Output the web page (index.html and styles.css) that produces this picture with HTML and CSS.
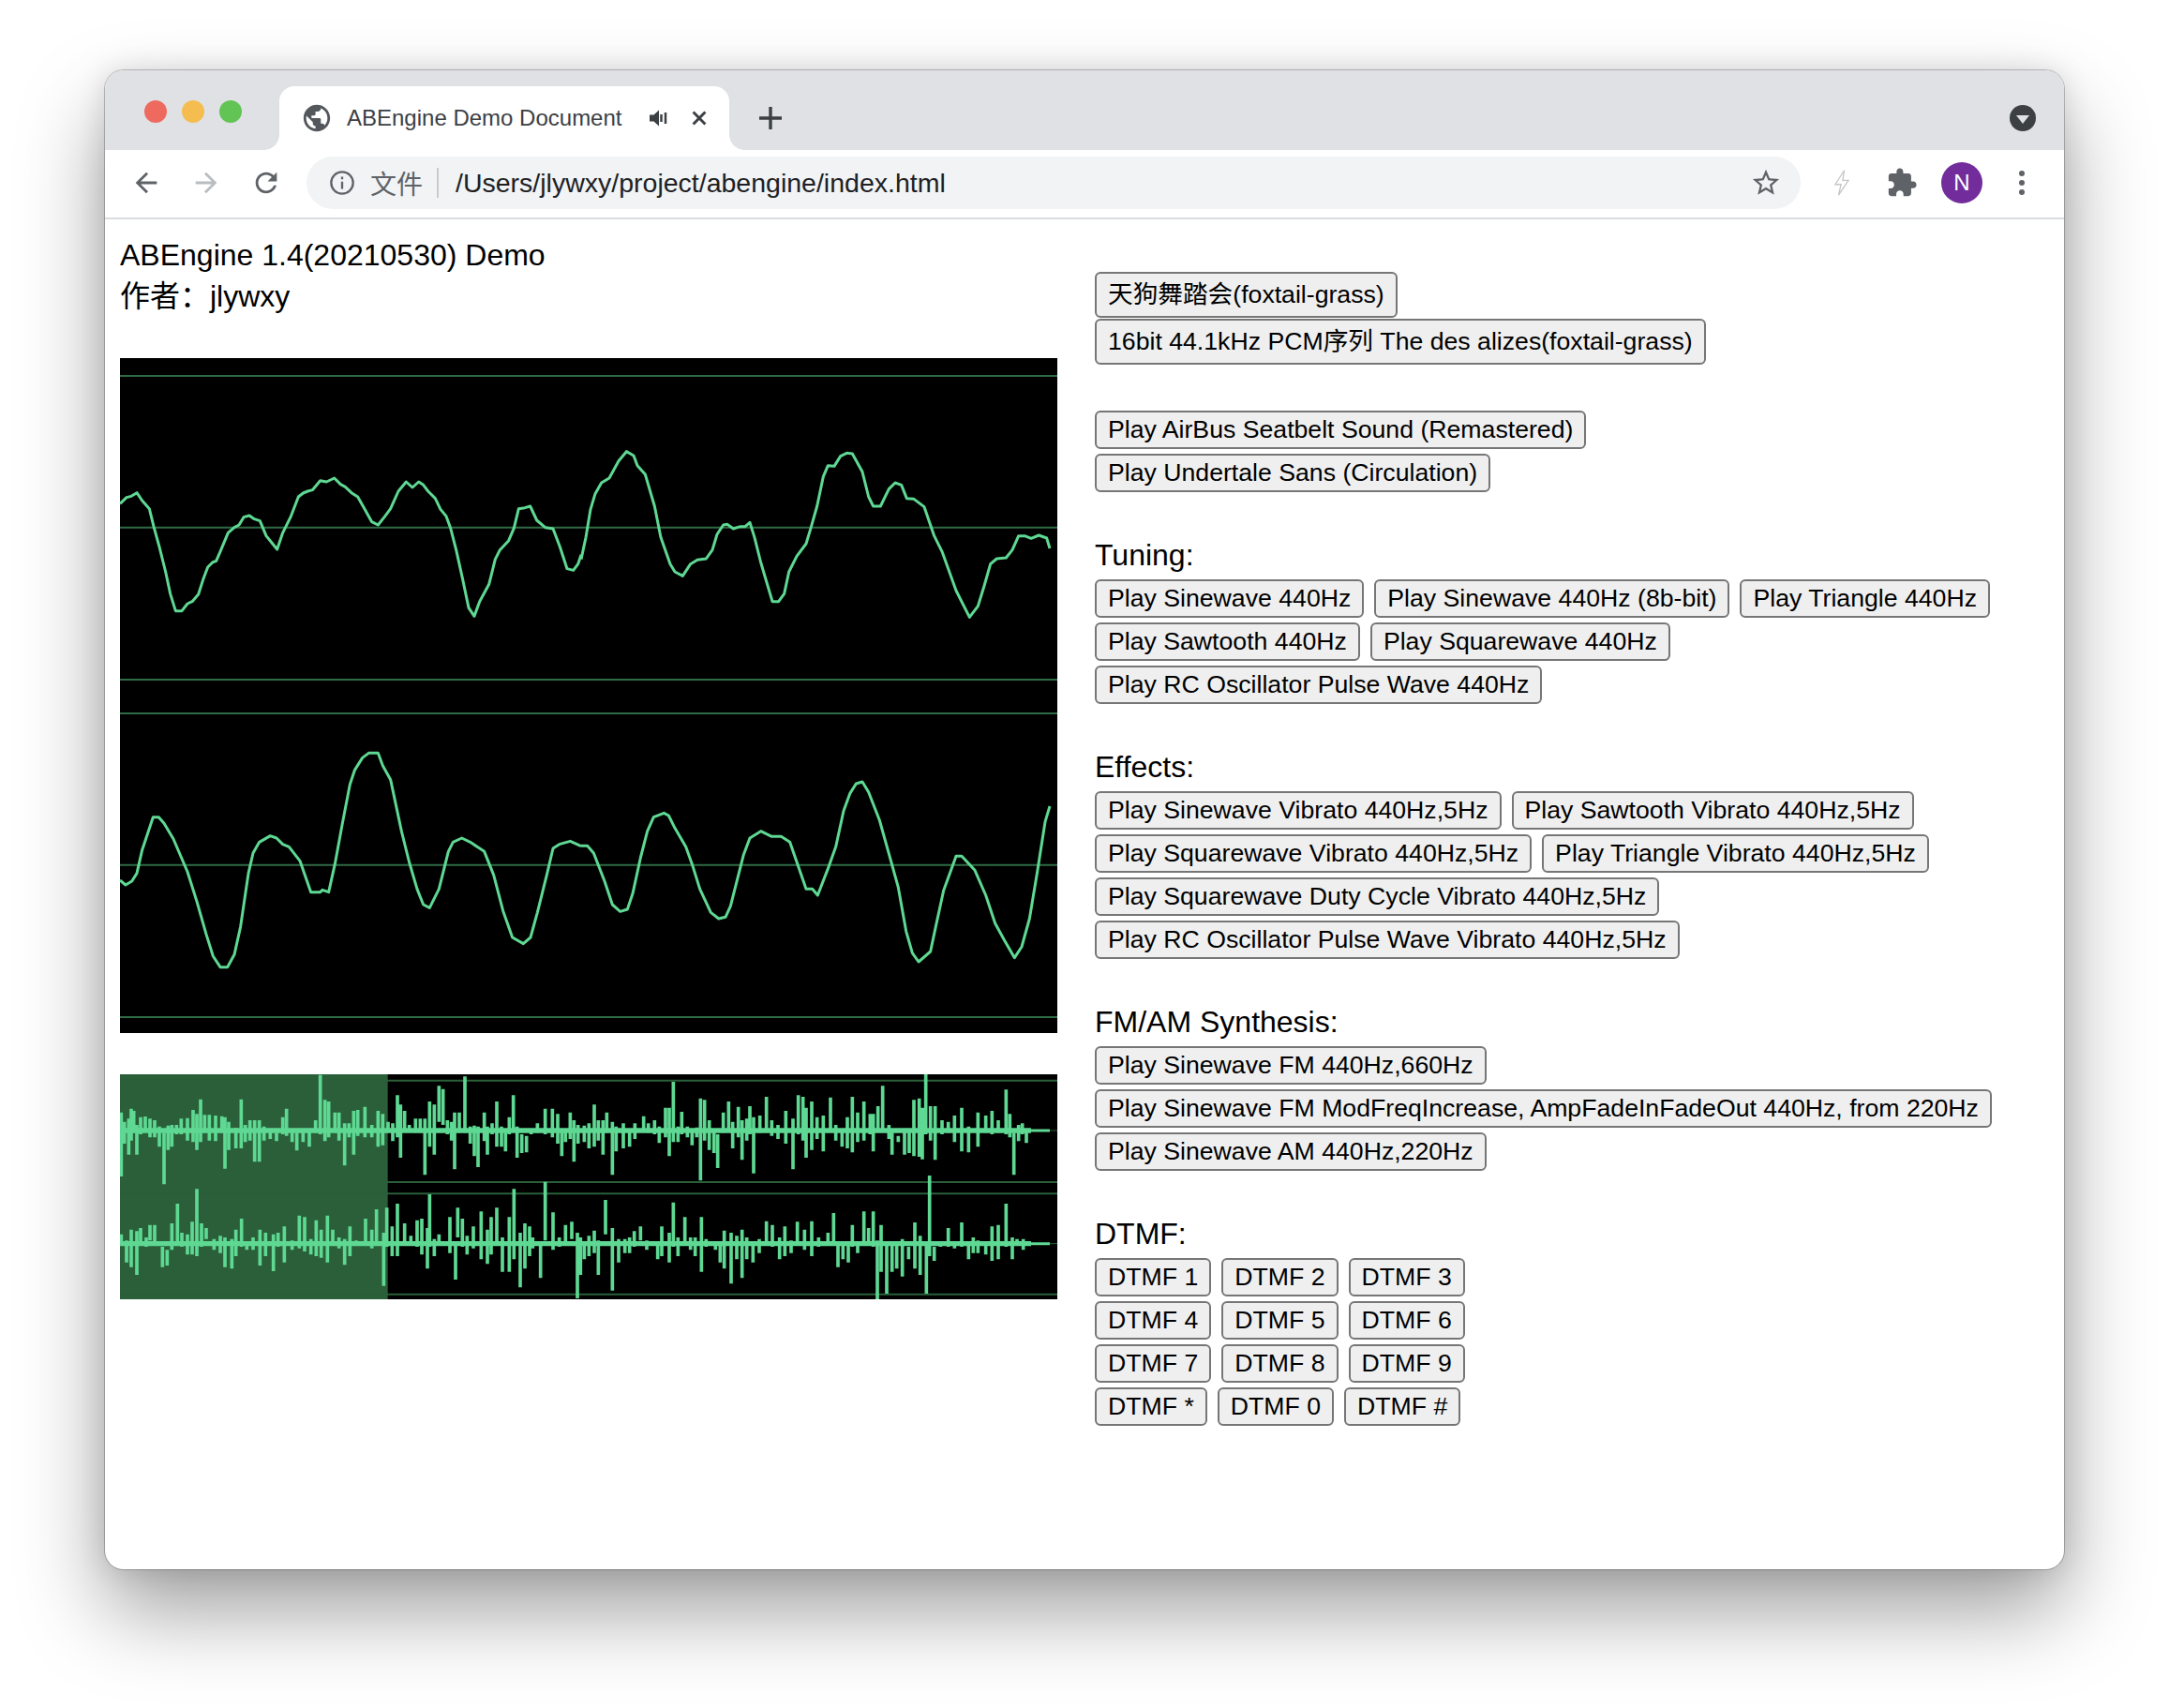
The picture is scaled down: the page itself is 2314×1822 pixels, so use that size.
FILE: index.html
```html
<!DOCTYPE html>
<html lang="en">
<head>
    <meta charset="UTF-8">
    <meta name="viewport" content="width=device-width, initial-scale=1.0">
    <title>ABEngine Demo Document</title>
    <link rel="stylesheet" href="styles.css">
</head>
<body>
    <div class="window">
        <div class="tabstrip">
            <div class="lights">
                <span class="light red"></span>
                <span class="light yellow"></span>
                <span class="light green"></span>
            </div>
            <div class="tab">
                <svg class="tab-globe" viewBox="0 0 24 24"><path d="M12 2C6.48 2 2 6.48 2 12s4.48 10 10 10 10-4.48 10-10S17.52 2 12 2zm-1 17.93c-3.95-.49-7-3.85-7-7.93 0-.62.08-1.21.21-1.79L9 15v1c0 1.1.9 2 2 2v1.93zm6.9-2.54c-.26-.81-1-1.39-1.9-1.39h-1v-3c0-.55-.45-1-1-1H8v-2h2c.55 0 1-.45 1-1V7h2c1.1 0 2-.9 2-2v-.41c2.93 1.19 5 4.06 5 7.41 0 2.08-.8 3.97-2.1 5.39z"/></svg>
                <span class="tab-title">ABEngine Demo Document</span>
                <svg class="tab-speaker" viewBox="0 0 24 24"><path d="M2 8.5h4.5L12 3.5v17l-5.500-5H2z"/><path d="M14.500 8v8M19 6v12" class="speaker-bars"/></svg>
                <svg class="tab-close" viewBox="0 0 24 24"><path d="M5 5l14 14M19 5L5 19"/></svg>
            </div>
            <svg class="new-tab" viewBox="0 0 30 30"><path d="M15 3v24M3 15h24"/></svg>
            <div class="tab-search"><span class="tab-search-arrow"></span></div>
        </div>

        <div class="toolbar">
            <div class="tool-btn"><svg class="icon" viewBox="0 0 24 24"><path d="M20 11H7.830l5.590-5.590L12 4l-8 8 8 8 1.410-1.410L7.830 13H20v-2z"/></svg></div>
            <div class="tool-btn"><svg class="icon faded" viewBox="0 0 24 24"><path d="M4 11h12.170l-5.590-5.590L12 4l8 8-8 8-1.410-1.410L16.170 13H4v-2z"/></svg></div>
            <div class="tool-btn"><svg class="icon" viewBox="0 0 24 24"><path d="M17.650 6.350C16.200 4.900 14.210 4 12 4c-4.420 0-7.990 3.580-7.990 8s3.570 8 7.990 8c3.730 0 6.840-2.550 7.730-6h-2.080c-.82 2.330-3.040 4-5.650 4-3.310 0-6-2.690-6-6s2.690-6 6-6c1.660 0 3.140.69 4.220 1.780L13 11h7V4l-2.350 2.350z"/></svg></div>
            <div class="omnibox">
                <svg class="omni-info" viewBox="0 0 24 24"><circle cx="12" cy="12" r="10"/><path d="M12 11v6.500M12 6.500v2.200"/></svg>
                <span class="omni-scheme">文件</span>
                <span class="omni-sep"></span>
                <span class="omni-url">/Users/jlywxy/project/abengine/index.html</span>
                <svg class="omni-star" viewBox="0 0 24 24"><path d="M22 9.240l-7.190-.62L12 2 9.190 8.630 2 9.240l5.460 4.730L5.820 21 12 17.270 18.180 21l-1.630-7.030L22 9.240zM12 15.400l-3.760 2.270 1-4.280-3.320-2.880 4.380-.38L12 6.100l1.710 4.040 4.380.38-3.320 2.880 1 4.280L12 15.400z"/></svg>
            </div>
            <div class="tool-btn first-ext"><svg class="bolt" viewBox="0 0 24 34"><path d="M15 2L4 19h7l-3 13 12-18h-7z"/></svg></div>
            <div class="tool-btn"><svg class="icon" viewBox="0 0 24 24"><path d="M20.500 11H19V7c0-1.100-.9-2-2-2h-4V3.500C13 2.120 11.880 1 10.500 1S8 2.120 8 3.500V5H4c-1.100 0-1.990.9-1.990 2v3.800H3.500c1.490 0 2.700 1.210 2.700 2.700s-1.210 2.700-2.700 2.700H2V20c0 1.100.9 2 2 2h3.800v-1.500c0-1.490 1.210-2.700 2.700-2.700 1.490 0 2.700 1.210 2.700 2.700V22H17c1.100 0 2-.9 2-2v-4h1.500c1.380 0 2.500-1.120 2.500-2.500S21.880 11 20.500 11z"/></svg></div>
            <div class="tool-btn"><span class="avatar">N</span></div>
            <div class="tool-btn"><span class="kebab"><i></i><i></i><i></i></span></div>
        </div>

        <div class="page">
            <div class="left-col">
                <div class="intro">ABEngine 1.4(20210530) Demo<br>作者：jlywxy</div>

                <svg class="scope" viewBox="0 0 3000 2160">
                    <g class="grid">
                        <path d="M0 57H3000M0 542H3000M0 1029H3000M0 1137H3000M0 1622H3000M0 2109H3000"/>
                    </g>
                    <g class="trace" transform="translate(-24,-6)">
                        <polyline points="24,472 45,452 60,448 78,437 95,462 118,488 132,545 150,610 170,690 185,760 202,815 222,815 240,792 255,785 275,762 290,715 305,675 320,660 332,655 345,625 370,565 390,548 405,540 420,515 438,510 452,520 472,527 492,575 510,597 527,618 545,565 570,515 595,450 610,438 625,432 640,428 665,398 685,402 710,390 730,410 745,418 765,437 785,450 805,485 830,530 850,540 870,515 890,488 915,432 940,402 960,420 980,402 995,412 1010,432 1033,455 1050,490 1068,512 1082,550 1100,620 1120,710 1140,805 1158,832 1175,785 1205,730 1225,650 1240,620 1268,590 1285,550 1300,488 1320,485 1337,480 1358,525 1385,548 1410,552 1432,610 1455,680 1475,685 1490,665 1500,635"/>
                    </g>
                    <g class="trace" transform="translate(1476,-6)">
                        <polyline points="0,650 15,580 30,490 45,440 65,405 90,390 120,335 145,305 168,318 180,350 205,378 235,480 255,580 285,665 300,690 325,703 350,665 372,652 400,648 420,620 435,570 455,540 468,538 487,552 510,545 525,545 540,532 555,580 575,660 612,785 632,785 650,760 665,690 690,640 720,600 735,550 755,480 775,385 790,350 810,352 830,320 850,310 868,312 900,370 920,450 935,480 958,480 985,425 1005,405 1025,412 1042,455 1065,457 1098,482 1130,575 1155,625 1200,750 1243,835 1270,800 1290,735 1310,665 1330,648 1360,645 1380,620 1400,575 1420,575 1440,583 1465,573 1490,582 1500,615"/>
                    </g>
                    <g class="trace" transform="translate(-24,1074)">
                        <polyline points="24,597 42,612 62,600 78,575 95,500 130,395 148,395 165,415 195,465 240,570 270,665 300,770 322,840 345,875 368,875 390,835 410,745 435,575 450,510 470,475 505,455 525,462 545,482 565,490 600,535 635,635 665,635 672,628 692,635 712,545 735,420 760,290 775,245 800,205 820,190 850,190 865,230 890,275 925,440 950,540 975,625 995,675 1015,685 1045,625 1075,505 1090,475 1118,462 1145,475 1190,505 1220,580 1250,695 1280,780 1315,800 1338,780 1360,700 1390,580 1410,495 1430,482 1465,472 1500,488"/>
                    </g>
                    <g class="trace" transform="translate(1476,1074)">
                        <polyline points="0,487 20,487 40,510 75,600 100,675 125,697 148,690 165,640 190,525 212,440 232,395 265,382 280,390 300,430 335,490 355,545 380,625 415,700 440,720 462,715 478,680 520,515 540,462 575,440 610,457 640,457 668,475 720,625 740,625 757,645 790,560 815,490 840,375 860,320 880,288 900,282 920,315 955,405 990,530 1015,620 1040,760 1060,830 1080,858 1118,825 1135,745 1160,630 1200,520 1218,520 1260,565 1295,645 1325,735 1355,790 1387,845 1410,810 1435,720 1460,570 1485,410 1500,360"/>
                    </g>
                </svg>

                <svg class="overview" viewBox="0 0 3000 720">
                    <rect class="played" x="0" y="0" width="857" height="720"/>
                    <g class="overview-grid">
                        <path d="M0 20H3000M0 345H3000M0 382H3000M0 704H3000"/>
                        <path class="mid" d="M0 180H3000M0 542H3000"/>
                    </g>
                    <g class="bars" transform="translate(-24,-48)">
                        <path d="M24 228H1500M24 590H1500" class="bars-core"/>
                        <path d="M28 170V375M38 200V270M52 190V305M60 158V260M68 165V235M78 210V305M90 185V240M105 183V225M120 190V250M135 195V250M150 215V280M165 235V400M178 212V290M190 210V280M205 210V240M220 190V240M240 188V260M258 162V265M270 175V290M282 128V265M295 178V235M310 178V260M330 180V262M350 182V235M360 185V350M372 200V290M395 220V285M412 128V285M425 210V265M440 195V260M455 195V328M470 195V328M485 215V260M505 230V255M525 235V262M545 185V240M557 158V245M575 230V265M590 235V292M610 228V265M630 225V280M650 195V235M665 50V240M680 130V262M692 135V250M712 170V230M725 170V260M743 205V340M757 205V250M772 165V305M785 162V245M808 152V250M830 210V250M850 165V280M865 175V275M882 200V235M897 205V262M912 115V250M922 145V315M935 165V225M950 210V230M970 190V235M985 190V235M1000 190V370M1015 135V280M1030 145V305M1045 85V200M1058 95V210M1072 195V240M1085 200V260M1095 170V352M1110 170V235M1128 55V235M1145 215V270M1158 212V310M1170 215V345M1190 170V262M1200 215V305M1215 205V240M1230 135V280M1245 215V280M1258 225V295M1270 185V240M1283 115V230M1295 215V315M1310 240V300M1325 245V298M1340 225V240M1360 205V235M1385 158V240M1408 158V250M1425 175V270M1438 225V310M1450 230V265M1465 170V255M1477 195V328M1490 210V270"/>
                        <path d="M28 560V595M45 580V650M60 545V665M78 550V690M90 540V590M108 570V600M120 530V580M135 530V590M160 600V665M175 610V660M190 525V610M208 462V595M222 555V600M240 560V625M255 520V625M270 415V630M285 525V600M300 540V575M325 575V610M345 565V620M360 570V665M382 575V670M395 545V630M413 510V600M430 590V610M450 570V610M472 545V660M490 555V630M515 560V678M530 555V600M550 535V650M575 580V610M598 500V605M615 505V615M635 575V625M652 515V630M668 545V635M688 500V650M705 545V590M725 570V605M743 575V658M760 535V630M780 580V595M810 510V590M830 545V605M845 480V590M868 555V725M878 475V600M895 535V630M912 462V630M935 525V595M955 565V590M975 515V600M990 510V625M1008 540V670M1015 432V600M1030 575V630M1045 560V590M1080 505V620M1098 590V705M1105 475V570M1120 510V600M1135 565V625M1155 535V605M1180 487V640M1200 545V655M1212 505V625M1230 475V595M1248 570V680M1270 505V680M1285 415V640M1305 555V730M1320 525V670M1335 535V630M1345 570V605M1370 590V700M1385 392V580M1410 490V610M1430 570V600M1450 530V590M1470 520V575M1488 555V765M1498 570V690"/>
                    </g>
                    <g class="bars" transform="translate(1476,-48)">
                        <path d="M0 228H1440M0 590H1440" class="bars-core"/>
                        <path class="bars-tail" d="M1440 228H1500M1440 590H1500"/>
                        <path d="M10 212V265M25 205V285M42 145V280M55 195V260M70 195V305M82 170V235M100 200V370M112 215V295M135 205V285M155 225V280M172 205V255M200 182V230M215 205V235M235 195V240M250 215V268M270 155V250M282 155V310M295 72V265M310 215V265M322 168V240M340 215V250M355 225V275M370 218V250M382 125V388M395 130V260M410 195V290M425 225V300M437 240V348M455 170V235M472 135V225M485 200V285M503 152V250M515 195V322M530 190V260M540 150V240M552 185V365M572 180V235M593 120V225M610 195V245M630 210V255M655 165V270M678 190V352M695 115V240M710 120V260M720 155V315M738 135V290M755 185V255M775 180V295M798 122V230M815 210V260M835 230V280M852 185V285M868 120V298M885 170V265M905 135V260M925 175V240M935 175V295M950 150V230M965 85V225M985 210V255M995 235V305M1015 245V265M1035 225V305M1050 225V300M1065 130V310M1082 125V312M1092 155V320M1103 48V240M1118 150V260M1133 150V322M1155 195V240M1175 200V235M1195 180V265M1218 155V295M1240 215V298M1270 170V280M1295 180V235M1315 165V240M1335 195V235M1360 97V240M1372 175V250M1385 235V370M1400 210V262M1412 205V240M1425 230V268"/>
                        <path d="M10 590V640M25 565V630M42 548V620M55 580V690M78 450V560M100 540V740M120 575V650M140 575V620M155 570V620M170 550V600M190 535V580M210 580V610M245 590V640M258 535V630M282 555V650M295 458V600M310 570V630M332 505V590M350 570V610M365 570V630M385 505V680M400 575V600M430 590V610M445 585V650M458 548V670M480 555V718M498 565V640M515 545V700M530 570V640M550 590V650M570 575V620M593 518V585M612 530V600M635 570V640M652 535V630M672 580V620M692 520V590M715 545V610M738 518V630M760 570V600M790 555V590M808 492V590M822 590V665M838 590V640M855 590V650M868 530V600M885 585V620M905 487V590M920 540V590M935 487V600M948 580V768M960 530V680M978 590V750M995 585V680M1010 590V670M1028 575V695M1048 600V640M1068 522V670M1085 565V690M1105 590V750M1115 372V630M1130 600V645M1150 590V600M1175 540V600M1195 585V605M1218 522V600M1240 590V640M1255 570V620M1270 580V620M1295 590V625M1315 535V645M1335 530V640M1360 462V600M1380 570V640M1395 575V595M1415 575V610"/>
                    </g>
                </svg>
            </div>

            <div class="right-col">
                <div class="stack tight">
                    <div class="btn-row"><button class="btn tall">天狗舞踏会(foxtail-grass)</button></div>
                    <div class="btn-row"><button class="btn tall">16bit 44.1kHz PCM序列 The des alizes(foxtail-grass)</button></div>
                </div>

                <div class="stack after-tall">
                    <div class="btn-row"><button class="btn">Play AirBus Seatbelt Sound (Remastered)</button></div>
                    <div class="btn-row"><button class="btn">Play Undertale Sans (Circulation)</button></div>
                </div>

                <div class="stack section">
                    <div class="section-title">Tuning:</div>
                    <div class="btn-row">
                        <button class="btn">Play Sinewave 440Hz</button>
                        <button class="btn">Play Sinewave 440Hz (8b-bit)</button>
                        <button class="btn">Play Triangle 440Hz</button>
                    </div>
                    <div class="btn-row">
                        <button class="btn">Play Sawtooth 440Hz</button>
                        <button class="btn">Play Squarewave 440Hz</button>
                    </div>
                    <div class="btn-row"><button class="btn">Play RC Oscillator Pulse Wave 440Hz</button></div>
                </div>

                <div class="stack section">
                    <div class="section-title">Effects:</div>
                    <div class="btn-row">
                        <button class="btn">Play Sinewave Vibrato 440Hz,5Hz</button>
                        <button class="btn">Play Sawtooth Vibrato 440Hz,5Hz</button>
                    </div>
                    <div class="btn-row">
                        <button class="btn">Play Squarewave Vibrato 440Hz,5Hz</button>
                        <button class="btn">Play Triangle Vibrato 440Hz,5Hz</button>
                    </div>
                    <div class="btn-row"><button class="btn">Play Squarewave Duty Cycle Vibrato 440Hz,5Hz</button></div>
                    <div class="btn-row"><button class="btn">Play RC Oscillator Pulse Wave Vibrato 440Hz,5Hz</button></div>
                </div>

                <div class="stack section">
                    <div class="section-title">FM/AM Synthesis:</div>
                    <div class="btn-row"><button class="btn">Play Sinewave FM 440Hz,660Hz</button></div>
                    <div class="btn-row"><button class="btn">Play Sinewave FM ModFreqIncrease, AmpFadeInFadeOut 440Hz, from 220Hz</button></div>
                    <div class="btn-row"><button class="btn">Play Sinewave AM 440Hz,220Hz</button></div>
                </div>

                <div class="stack section">
                    <div class="section-title">DTMF:</div>
                    <div class="btn-row">
                        <button class="btn">DTMF 1</button>
                        <button class="btn">DTMF 2</button>
                        <button class="btn">DTMF 3</button>
                    </div>
                    <div class="btn-row">
                        <button class="btn">DTMF 4</button>
                        <button class="btn">DTMF 5</button>
                        <button class="btn">DTMF 6</button>
                    </div>
                    <div class="btn-row">
                        <button class="btn">DTMF 7</button>
                        <button class="btn">DTMF 8</button>
                        <button class="btn">DTMF 9</button>
                    </div>
                    <div class="btn-row">
                        <button class="btn">DTMF *</button>
                        <button class="btn">DTMF 0</button>
                        <button class="btn">DTMF #</button>
                    </div>
                </div>
            </div>
        </div>
    </div>
</body>
</html>
```

FILE: styles.css
```css
body {
    margin: 0;
    padding: 75px 0 0 112px;
    height: 1822px;
    box-sizing: border-box;
    background: #fff;
    font-family: "Liberation Sans", "Noto Sans CJK SC", Arial, sans-serif;
    overflow: hidden;
}
.window {
    display: flex;
    flex-direction: column;
    width: 2090px;
    height: 1599px;
    background: #fff;
    border-radius: 20px;
    overflow: hidden;
    box-shadow: 0 0 0 1px rgba(0,0,0,0.22), 0 44px 90px rgba(0,0,0,0.38), 0 0 30px rgba(0,0,0,0.12);
}

/* tab strip */
.tabstrip {
    display: flex;
    align-items: flex-end;
    height: 85px;
    flex-shrink: 0;
    background: #dfe1e5;
}
.lights {
    display: flex;
    gap: 16px;
    align-self: flex-start;
    margin: 32px 0 0 42px;
}
.light {
    width: 24px;
    height: 24px;
    border-radius: 50%;
}
.red { background: #ee6a5f; }
.yellow { background: #f5bd4f; }
.green { background: #61c454; }
.tab {
    position: relative;
    display: flex;
    align-items: center;
    width: 480px;
    height: 68px;
    box-sizing: border-box;
    margin-left: 40px;
    padding: 0 0 0 23px;
    background: #fff;
    border-radius: 16px 16px 0 0;
}
.tab::before, .tab::after {
    content: "";
    position: absolute;
    bottom: 0;
    width: 16px;
    height: 16px;
}
.tab::before {
    left: -16px;
    background: radial-gradient(circle at 0 0, #dfe1e5 15.5px, #fff 16px);
}
.tab::after {
    right: -16px;
    background: radial-gradient(circle at 100% 0, #dfe1e5 15.5px, #fff 16px);
}
.tab-globe {
    width: 34px;
    height: 34px;
    fill: #54575c;
}
.tab-title {
    width: 304px;
    margin-left: 15px;
    font-size: 24px;
    color: #3c4043;
    white-space: nowrap;
}
.tab-speaker {
    width: 24px;
    height: 24px;
    margin-left: 17px;
    fill: #3c4043;
}
.speaker-bars {
    fill: none;
    stroke: #3c4043;
    stroke-width: 2.5;
}
.tab-close {
    width: 22px;
    height: 22px;
    margin-left: 20px;
    fill: none;
    stroke: #3c4043;
    stroke-width: 3.2;
}
.new-tab {
    width: 30px;
    height: 30px;
    margin: 0 0 19px 29px;
    fill: none;
    stroke: #3c4043;
    stroke-width: 3.4;
}
.tab-search {
    display: flex;
    align-items: center;
    justify-content: center;
    width: 28px;
    height: 28px;
    margin: 0 30px 20px auto;
    border-radius: 50%;
    background: #3c4043;
}
.tab-search-arrow {
    width: 0;
    height: 0;
    margin-top: 3px;
    border-left: 7px solid transparent;
    border-right: 7px solid transparent;
    border-top: 9px solid #dfe1e5;
}

/* toolbar */
.toolbar {
    display: flex;
    align-items: center;
    height: 74px;
    flex-shrink: 0;
    box-sizing: border-box;
    padding: 0 0 2px 12px;
    background: #fff;
    border-bottom: 2px solid #dadce0;
}
.tool-btn {
    display: flex;
    align-items: center;
    justify-content: center;
    width: 64px;
    height: 56px;
    flex-shrink: 0;
}
.first-ext { margin-left: 12px; }
.icon {
    width: 34px;
    height: 34px;
    fill: #5f6368;
}
.icon.faded { fill: #b9bcc0; }
.omnibox {
    display: flex;
    align-items: center;
    width: 1594px;
    height: 56px;
    flex-shrink: 0;
    box-sizing: border-box;
    margin-left: 11px;
    padding: 0 20px 0 24px;
    background: #f1f3f4;
    border-radius: 28px;
}
.omni-info {
    width: 28px;
    height: 28px;
    fill: none;
    stroke: #5f6368;
    stroke-width: 2;
}
.omni-scheme {
    margin-left: 16px;
    font-size: 28px;
    color: #5f6368;
}
.omni-sep {
    width: 2px;
    height: 32px;
    margin: 0 18px 0 15px;
    background: #c8cacd;
}
.omni-url {
    font-size: 28.5px;
    color: #202124;
    white-space: nowrap;
}
.omni-star {
    width: 34px;
    height: 34px;
    margin-left: auto;
    fill: #5f6368;
}
.bolt {
    width: 22px;
    height: 30px;
    fill: none;
    stroke: #c4c6c9;
    stroke-width: 1.5;
}
.avatar {
    display: flex;
    align-items: center;
    justify-content: center;
    width: 44px;
    height: 44px;
    border-radius: 50%;
    background: #722c9b;
    color: #fff;
    font-size: 24px;
}
.kebab {
    display: flex;
    flex-direction: column;
    gap: 4px;
}
.kebab i {
    width: 6px;
    height: 6px;
    border-radius: 50%;
    background: #5f6368;
}

/* page */
.page {
    display: flex;
    gap: 40px;
    padding: 16px;
    font-size: 32px;
    color: #000;
}
.left-col {
    display: flex;
    flex-direction: column;
    width: 1000px;
    flex-shrink: 0;
}
.intro {
    line-height: 44px;
    height: 88px;
    margin-bottom: 44px;
}
.scope, .overview {
    display: block;
    width: 1000px;
    background: #000;
}
.scope { height: 720px; margin-bottom: 44px; }
.overview { height: 240px; }
.grid path {
    fill: none;
    stroke: #2f6b45;
    stroke-width: 6;
}
.trace polyline {
    fill: none;
    stroke: #5ed892;
    stroke-width: 9;
    stroke-linejoin: round;
}
.played { fill: #2a5f39; }
.overview-grid path {
    fill: none;
    stroke: #2a5f39;
    stroke-width: 6;
}
.overview-grid .mid { stroke-width: 3; }
.bars path {
    fill: none;
    stroke: #5ed892;
    stroke-width: 11;
}
.bars .bars-core { stroke-width: 16; }
.bars .bars-tail { stroke-width: 9; }

.right-col {
    display: flex;
    flex-direction: column;
    padding-top: 40px;
}
.stack {
    display: flex;
    flex-direction: column;
    gap: 5px;
}
.stack.tight { gap: 1px; }
.after-tall { margin-top: 49px; }
.section { margin-top: 45px; }
.section-title {
    line-height: 44px;
    margin-bottom: -1px;
}
.btn-row {
    display: flex;
    gap: 11px;
}
.btn {
    height: 41px;
    box-sizing: border-box;
    padding: 0 12px;
    border: 2px solid #767676;
    border-radius: 6px;
    background: #efefef;
    font-family: "Liberation Sans", "Noto Sans CJK SC", Arial, sans-serif;
    font-size: 26.67px;
    line-height: 33px;
    color: #000;
    white-space: nowrap;
}
.btn.tall { height: 49px; }
```
